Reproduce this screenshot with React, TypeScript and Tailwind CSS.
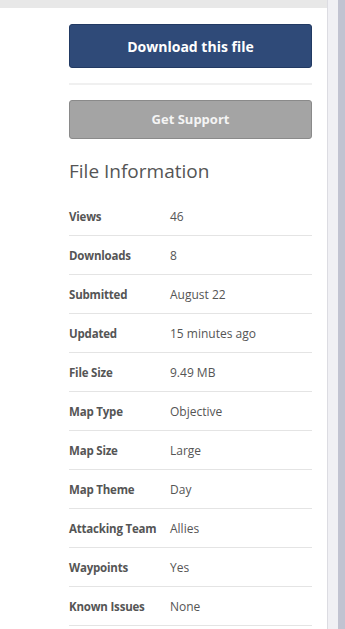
const rows: [string, string][] = [
  ['Views', '46'],
  ['Downloads', '8'],
  ['Submitted', 'August 22'],
  ['Updated', '15 minutes ago'],
  ['File Size', '9.49 MB'],
  ['Map Type', 'Objective'],
  ['Map Size', 'Large'],
  ['Map Theme', 'Day'],
  ['Attacking Team', 'Allies'],
  ['Waypoints', 'Yes'],
  ['Known Issues', 'None'],
];

export default function App() {
  return (
    <div className="flex h-[629px] w-[345px] overflow-hidden bg-white font-['Open_Sans',sans-serif]">
      <div className="flex-1 flex flex-col">
        <div className="h-2 bg-[#e8e8e8]" />
        <div className="pl-[69px] pr-[15px] pt-4">
          <button className="w-full h-[44px] rounded-[3px] border border-[#223a63] bg-[#2f4a78] text-white text-[14px] font-bold">
            Download this file
          </button>
          <div className="h-[2px] bg-[#f0f0f0] mt-[15px] mb-[15px]" />
          <button className="w-full h-[39px] rounded-[3px] border border-[#8a8a8a] bg-[#a4a4a4] text-[#f4f4f4] text-[13px] font-bold">
            Get Support
          </button>
          <h2 className="mt-[18px] mb-[12px] text-[19px] leading-[28px] text-[#555]">File Information</h2>
          <div>
            {rows.map(([k, v]) => (
              <div key={k} className="flex items-center h-[39px] pt-[2px] border-b border-[#e4e4e4] text-[12px] text-[#555]">
                <div className="w-[101px] font-bold text-[11.5px] tracking-[-0.2px]">{k}</div>
                <div>{v}</div>
              </div>
            ))}
          </div>
        </div>
      </div>
      <div className="w-[11px] border-l border-[#dcdce2] bg-[#f0f0f4]" />
      <div className="w-[7px] bg-[#c1c3d1]" />
    </div>
  );
}
